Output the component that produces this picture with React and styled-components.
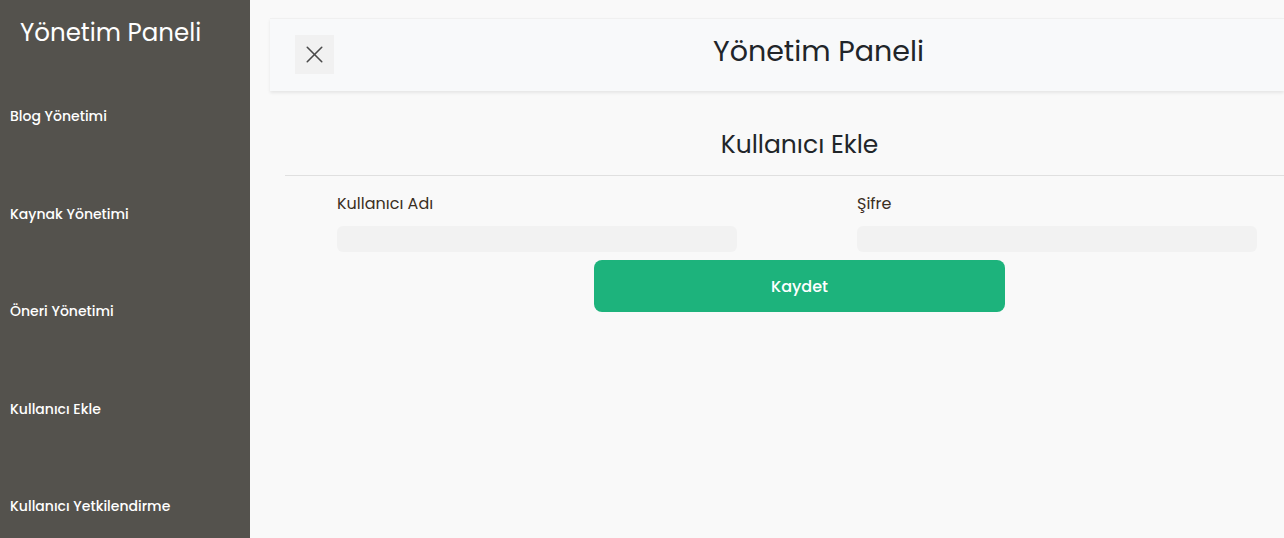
import React, { useState } from 'react';
import styled, { createGlobalStyle } from 'styled-components';
import { X } from 'lucide-react';

const GlobalStyle = createGlobalStyle`
  html, body {
    margin: 0;
    padding: 0;
    overflow: hidden;
    background: #f9f9f9;
    font-family: "Poppins", "Open Sans", "Liberation Sans", sans-serif;
  }
  * { box-sizing: border-box; }
`;

const menuItems = [
  'Blog Yönetimi',
  'Kaynak Yönetimi',
  'Öneri Yönetimi',
  'Kullanıcı Ekle',
  'Kullanıcı Yetkilendirme',
];

const App = () => {
  const [username, setUsername] = useState('');
  const [password, setPassword] = useState('');

  return (
    <Layout>
      <GlobalStyle />
      {/* Sidebar */}
      <Sidebar>
        <SidebarTitle>Yönetim Paneli</SidebarTitle>
        <Menu>
          {menuItems.map((item) => (
            <MenuItem key={item}>{item}</MenuItem>
          ))}
        </Menu>
      </Sidebar>

      {/* Main */}
      <Main>
        <Header>
          <CloseButton aria-label="Kapat">
            <X size={29} strokeWidth={1.3} color="#4a4a4a" />
          </CloseButton>
          <HeaderTitle>Yönetim Paneli</HeaderTitle>
        </Header>

        <FormSection>
          <FormTitle>Kullanıcı Ekle</FormTitle>
          <Divider />
          <FieldRow>
            <Field>
              <Label>Kullanıcı Adı</Label>
              <Input value={username} onChange={(e) => setUsername(e.target.value)} />
            </Field>
            <Field>
              <Label>Şifre</Label>
              <Input type="password" value={password} onChange={(e) => setPassword(e.target.value)} />
            </Field>
          </FieldRow>
          <SaveButton>Kaydet</SaveButton>
        </FormSection>
      </Main>
    </Layout>
  );
};

const Layout = styled.div`
  display: flex;
  width: 100vw;
  height: 100vh;
  overflow: hidden;
`;

const Sidebar = styled.aside`
  width: 250px;
  flex-shrink: 0;
  background-color: #54524d;
  color: #fff;
  display: flex;
  flex-direction: column;
`;

const SidebarTitle = styled.h1`
  margin: 0;
  padding: 15px 20px 0;
  font-size: 24.5px;
  font-weight: 400;
  line-height: 36px;
`;

const Menu = styled.nav`
  display: flex;
  flex-direction: column;
  gap: 77.5px;
  padding-top: 55px;
`;

const MenuItem = styled.div`
  padding: 0 10px;
  font-size: 14px;
  font-weight: 500;
  line-height: 20px;
  cursor: pointer;
`;

const Main = styled.main`
  flex: 1;
  min-width: 0;
  padding: 18px 0 20px 20px;
  display: flex;
  flex-direction: column;
`;

const Header = styled.header`
  height: 73px;
  flex-shrink: 0;
  display: flex;
  align-items: center;
  padding: 0 0 0 25px;
  background-color: #f8f9fa;
  border-top: 1px solid #f0f0f0;
  box-shadow: 0 2px 3px rgba(0, 0, 0, 0.08);
`;

const CloseButton = styled.button`
  width: 39px;
  height: 39px;
  margin-top: -2px;
  border: none;
  background-color: #f1f1f1;
  display: flex;
  align-items: center;
  justify-content: center;
  padding: 0;
  cursor: pointer;
`;

const HeaderTitle = styled.h2`
  flex: 1;
  margin: -8px 0 0;
  padding-left: 19px;
  text-align: center;
  font-size: 28.5px;
  font-weight: 400;
  color: #212529;
`;

const FormSection = styled.section`
  margin-left: 15px;
  display: flex;
  flex-direction: column;
`;

const FormTitle = styled.h3`
  margin: 0;
  padding: 36px 0 12px 30px;
  text-align: center;
  font-size: 25px;
  font-weight: 400;
  line-height: 36px;
  color: #212529;
`;

const Divider = styled.div`
  height: 1px;
  background-color: #e0e0e0;
`;

const FieldRow = styled.div`
  display: flex;
  justify-content: space-between;
  padding: 16px 27px 0 52px;
`;

const Field = styled.div`
  width: 400px;
  display: flex;
  flex-direction: column;
`;

const Label = styled.label`
  font-size: 16px;
  line-height: 24px;
  color: #3a2e22;
  margin-bottom: 10px;
`;

const Input = styled.input`
  height: 26px;
  border: none;
  border-radius: 6px;
  background-color: #f2f2f2;
  outline: none;
  padding: 0 10px;
  font-family: inherit;
`;

const SaveButton = styled.button`
  align-self: center;
  margin: 8px 0 0 30px;
  width: 411px;
  height: 52px;
  border: none;
  border-radius: 8px;
  background-color: #1db37c;
  color: #fff;
  font-family: inherit;
  font-size: 16px;
  font-weight: 500;
  cursor: pointer;
`;

export default App;
